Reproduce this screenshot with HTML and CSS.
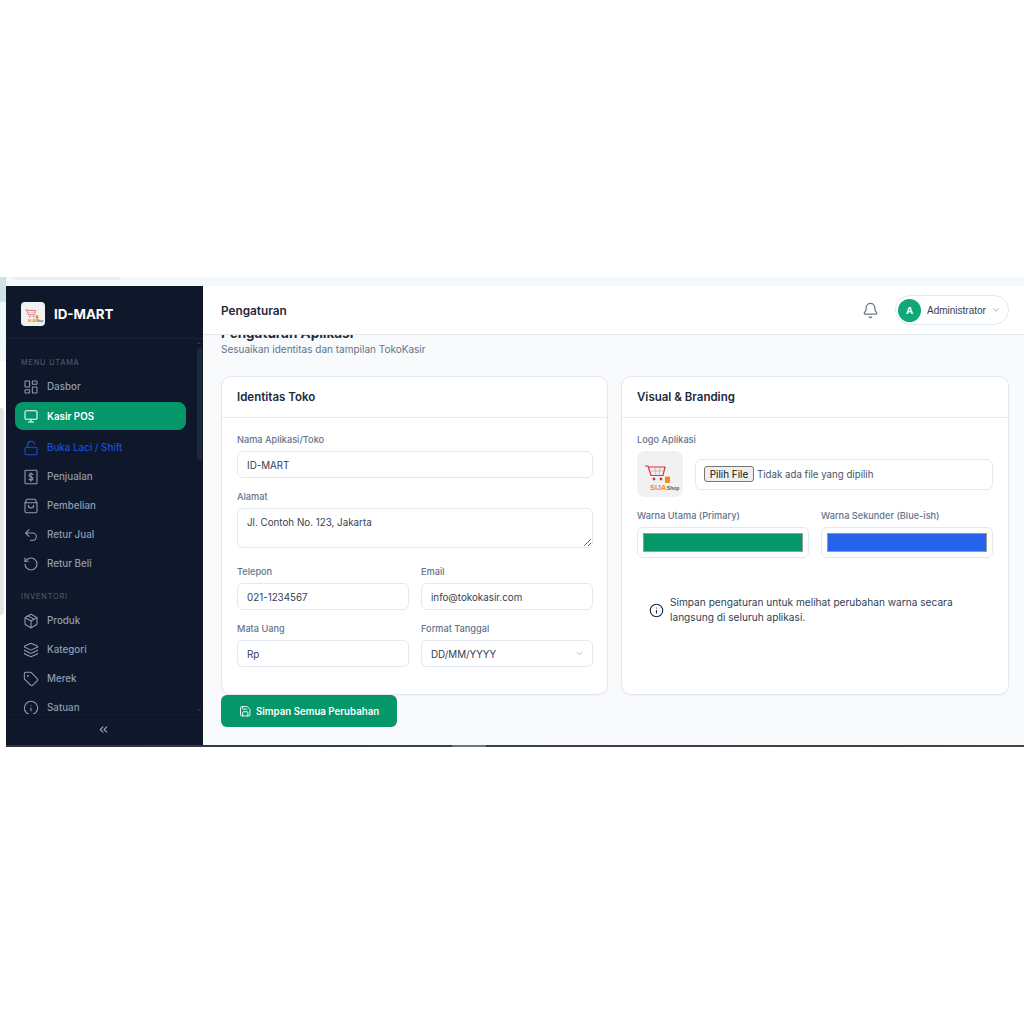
FILE: index.html
```html
<!DOCTYPE html>
<html lang="id">
<head>
<meta charset="utf-8">
<title>Pengaturan - ID-MART</title>
<link rel="stylesheet" href="styles.css">
</head>
<body>
<svg class="defs" width="0" height="0" aria-hidden="true">
  <symbol id="logo" viewBox="0 0 46 46">
    <path d="M8 15h3l3 9.500h12l2-8.500H12" fill="none" stroke="#d9333a" stroke-width="1.200"/>
    <path d="M13 20h14M18 16l.8 8.500M23 16l-.8 8.500" fill="none" stroke="#e77" stroke-width=".5"/>
    <circle cx="17" cy="28" r="1.400" fill="#d9333a"/>
    <circle cx="24" cy="28" r="1.400" fill="#d9333a"/>
    <rect x="28" y="25.500" width="5" height="6.500" rx="1" fill="#f08a1d"/>
    <text x="13" y="38.500" class="logo-a">SIJA</text>
    <text x="29.800" y="38.500" class="logo-b">Shop</text>
  </symbol>
</svg>
<div class="frame">
  <div class="edge">
    <div class="edge-a"></div>
    <div class="edge-b"></div>
    <div class="edge-c"></div>
    <div class="edge-d"></div>
  </div>
  <div class="app">
    <div class="topstrip"><div class="topstrip-pill"></div></div>
    <div class="workspace">
      <aside class="sidebar">
        <div class="brand">
          <svg class="brand-logo"><use href="#logo"/></svg>
          <span class="brand-name">ID-MART</span>
        </div>
        <nav class="nav">
          <div class="nav-label">MENU UTAMA</div>
          <a class="nav-item"><svg class="ico" viewBox="0 0 24 24"><rect x="3" y="3" width="7" height="9" rx="1"/><rect x="14" y="3" width="7" height="5" rx="1"/><rect x="14" y="12" width="7" height="9" rx="1"/><rect x="3" y="16" width="7" height="5" rx="1"/></svg>Dasbor</a>
          <a class="nav-item active"><svg class="ico" viewBox="0 0 24 24"><rect x="3" y="4" width="18" height="13" rx="2"/><path d="M8 21h8M12 17v4"/></svg>Kasir POS</a>
          <a class="nav-item blue"><svg class="ico" viewBox="0 0 24 24"><rect x="3" y="11" width="18" height="11" rx="2"/><path d="M7 11V7a5 5 0 0 1 9.900-1"/></svg>Buka Laci / Shift</a>
          <a class="nav-item"><svg class="ico" viewBox="0 0 24 24"><rect x="3" y="2" width="18" height="20" rx="1"/><path d="M15 8.500c-.5-1-1.600-1.500-3-1.500-1.800 0-3 .9-3 2.400 0 3.300 6 1.600 6 4.900 0 1.500-1.300 2.500-3 2.500-1.500 0-2.600-.6-3.100-1.700M12 5.500v13"/></svg>Penjualan</a>
          <a class="nav-item"><svg class="ico" viewBox="0 0 24 24"><path d="M6 2h12l3 5v13a2 2 0 0 1-2 2H5a2 2 0 0 1-2-2V7z"/><path d="M3 7h18M16 11a4 4 0 0 1-8 0"/></svg>Pembelian</a>
          <a class="nav-item"><svg class="ico" viewBox="0 0 24 24"><path d="M9 14 4 9l5-5"/><path d="M4 9h10.500a5.500 5.500 0 0 1 0 11H11"/></svg>Retur Jual</a>
          <a class="nav-item"><svg class="ico" viewBox="0 0 24 24"><path d="M3 12a9 9 0 1 0 9-9 9.750 9.750 0 0 0-6.740 2.740L3 8"/><path d="M3 3v5h5"/></svg>Retur Beli</a>
          <div class="nav-label second">INVENTORI</div>
          <a class="nav-item"><svg class="ico" viewBox="0 0 24 24"><path d="M21 8a2 2 0 0 0-1-1.730l-7-4a2 2 0 0 0-2 0l-7 4A2 2 0 0 0 3 8v8a2 2 0 0 0 1 1.730l7 4a2 2 0 0 0 2 0l7-4A2 2 0 0 0 21 16Z"/><path d="m7.500 4.270 9 5.150M3.300 7 12 12l8.700-5M12 22V12"/></svg>Produk</a>
          <a class="nav-item"><svg class="ico" viewBox="0 0 24 24"><path d="m12.800 2.200a2 2 0 0 0-1.600 0L2.600 6.100a1 1 0 0 0 0 1.800l8.600 3.900a2 2 0 0 0 1.600 0l8.600-3.900a1 1 0 0 0 0-1.800z"/><path d="M2 12a1 1 0 0 0 .6.900l8.600 3.900a2 2 0 0 0 1.600 0l8.600-3.900A1 1 0 0 0 22 12"/><path d="M2 17a1 1 0 0 0 .6.900l8.600 3.900a2 2 0 0 0 1.600 0l8.600-3.900A1 1 0 0 0 22 17"/></svg>Kategori</a>
          <a class="nav-item"><svg class="ico" viewBox="0 0 24 24"><path d="M12.600 2.600A2 2 0 0 0 11.200 2H4a2 2 0 0 0-2 2v7.200a2 2 0 0 0 .6 1.400l8.700 8.700a2.400 2.400 0 0 0 3.400 0l6.600-6.600a2.400 2.400 0 0 0 0-3.400z"/><circle cx="7.500" cy="7.500" r=".6"/></svg>Merek</a>
          <a class="nav-item"><svg class="ico" viewBox="0 0 24 24"><circle cx="12" cy="12" r="10"/><path d="M12 16v-4M12 8h.01"/></svg>Satuan</a>
        </nav>
        <div class="scrollbar"><div class="scrollbar-thumb"></div></div>
        <div class="collapse"><svg class="ico-collapse" viewBox="0 0 24 24"><path d="m11 17-5-5 5-5M18 17l-5-5 5-5"/></svg></div>
      </aside>
      <main class="main">
        <header class="header">
          <h1 class="page-title">Pengaturan</h1>
          <div class="header-right">
            <svg class="bell" viewBox="0 0 24 24"><path d="M10.300 21a2 2 0 0 0 3.400 0"/><path d="M3.300 15.300A1 1 0 0 0 4 17h16a1 1 0 0 0 .7-1.700C19.400 14 18 12.500 18 8A6 6 0 0 0 6 8c0 4.500-1.400 6-2.700 7.300"/></svg>
            <div class="user">
              <span class="avatar">A</span>
              <span class="user-name">Administrator</span>
              <svg class="chev" viewBox="0 0 24 24"><path d="m6 9 6 6 6-6"/></svg>
            </div>
          </div>
        </header>
        <div class="content">
          <h2 class="heading">Pengaturan Aplikasi</h2>
          <p class="sub">Sesuaikan identitas dan tampilan TokoKasir</p>
          <div class="cards">
            <section class="card">
              <h3 class="card-title">Identitas Toko</h3>
              <div class="card-body">
                <label class="field">
                  <span class="label">Nama Aplikasi/Toko</span>
                  <input class="control" value="ID-MART">
                </label>
                <label class="field">
                  <span class="label">Alamat</span>
                  <textarea class="control area">Jl. Contoh No. 123, Jakarta</textarea>
                </label>
                <div class="two">
                  <label class="field">
                    <span class="label">Telepon</span>
                    <input class="control" value="021-1234567">
                  </label>
                  <label class="field">
                    <span class="label">Email</span>
                    <input class="control" value="info@tokokasir.com">
                  </label>
                  <label class="field">
                    <span class="label">Mata Uang</span>
                    <input class="control" value="Rp">
                  </label>
                  <label class="field">
                    <span class="label">Format Tanggal</span>
                    <span class="select-wrap">
                      <select class="control select"><option>DD/MM/YYYY</option></select>
                      <svg class="select-chev" viewBox="0 0 24 24"><path d="m6 9 6 6 6-6"/></svg>
                    </span>
                  </label>
                </div>
              </div>
            </section>
            <section class="card">
              <h3 class="card-title">Visual &amp; Branding</h3>
              <div class="card-body">
                <div class="field">
                  <span class="label">Logo Aplikasi</span>
                  <div class="logo-row">
                    <svg class="logo-box"><use href="#logo"/></svg>
                    <div class="file-box">
                      <button class="file-btn" type="button">Pilih File</button>
                      <span class="file-text">Tidak ada file yang dipilih</span>
                    </div>
                  </div>
                </div>
                <div class="two">
                  <label class="field">
                    <span class="label">Warna Utama (Primary)</span>
                    <input class="color" type="color" value="#059669">
                  </label>
                  <label class="field">
                    <span class="label">Warna Sekunder (Blue-ish)</span>
                    <input class="color" type="color" value="#2563eb">
                  </label>
                </div>
                <div class="info">
                  <svg class="info-ico" viewBox="0 0 24 24"><circle cx="12" cy="12" r="10"/><path d="M12 16v-4M12 8h.01"/></svg>
                  <p class="info-text">Simpan pengaturan untuk melihat perubahan warna secara langsung di seluruh aplikasi.</p>
                </div>
              </div>
            </section>
          </div>
          <button class="save" type="button"><svg class="save-ico" viewBox="0 0 24 24"><path d="M15.200 3a2 2 0 0 1 1.400.6l3.800 3.800a2 2 0 0 1 .6 1.400V19a2 2 0 0 1-2 2H5a2 2 0 0 1-2-2V5a2 2 0 0 1 2-2z"/><path d="M17 21v-7a1 1 0 0 0-1-1H8a1 1 0 0 0-1 1v7M7 3v4a1 1 0 0 0 1 1h7"/></svg>Simpan Semua Perubahan</button>
        </div>
      </main>
    </div>
    <div class="bottomline"></div>
  </div>
</div>
</body>
</html>
```
FILE: styles.css
```css
* { box-sizing: border-box; }
html, body { margin: 0; background: #fff; }
body { font-family: Inter, "Liberation Sans", sans-serif; color: #1e293b; padding-top: 277px; height: 1024px; overflow: hidden; }
.defs { position: absolute; }
.logo-a { font-family: "Liberation Sans", sans-serif; font-weight: 700; font-size: 7.400px; fill: #f08a1d; }
.logo-b { font-family: "Liberation Sans", sans-serif; font-weight: 700; font-size: 5px; fill: #3b5a78; }

.frame { display: flex; height: 470px; }
.edge { width: 6px; flex: none; display: flex; flex-direction: column; }
.edge-a { height: 25px; background: #cfe3e6; }
.edge-b { height: 59px; background: #eef8fb; }
.edge-c { height: 47px; background: #fff; }
.edge-d { height: 207px; width: 4px; background: #e4e4e6; border-radius: 0 3px 3px 0; }

.app { flex: 1; min-width: 0; display: flex; flex-direction: column; }
.topstrip { height: 9px; background: #f4f8fb; padding: 0 904px 0 7px; flex: none; }
.topstrip-pill { height: 3px; background: #e9eff2; border-radius: 0 0 6px 6px; }
.workspace { display: flex; height: 459px; flex: none; }
.bottomline { height: 2px; flex: none; background: linear-gradient(90deg, #2f3340 0, #3a3f4d 446px, #6f737b 446px, #6f737b 480px, #3a3f4d 480px, #4a4440 100%); }

/* sidebar */
.sidebar { width: 197px; flex: none; background: #0f172a; display: flex; flex-direction: column; position: relative; }
.brand { height: 53px; flex: none; display: flex; align-items: center; gap: 9px; padding: 3px 0 0 15px; border-bottom: 1px solid #1a2336; }
.brand-logo { width: 24px; height: 24px; background: #f1f1f1; border-radius: 4px; }
.brand-name { font-size: 13.300px; font-weight: 700; color: #fff; }
.nav { flex: 1; min-height: 0; overflow: hidden; padding: 18px 17px 0 9px; }
.nav-label { font-size: 7.400px; line-height: 10px; letter-spacing: .75px; font-weight: 500; color: #475569; padding: 1px 0 4px 6px; }
.nav-label.second { margin-top: 13px; }
.nav-item { display: flex; align-items: center; gap: 8px; height: 29px; padding-left: 8px; border-radius: 8px; font-size: 9.800px; font-weight: 500; color: #8e9db3; }
.nav-item.active { height: 28px; margin: 1px 0 3px; background: #059669; color: #fff; font-weight: 600; }
.nav-item.blue { color: #1d4ed8; }
.ico { width: 16px; height: 16px; flex: none; fill: none; stroke: currentColor; stroke-width: 1.600; stroke-linecap: round; stroke-linejoin: round; }
.scrollbar { position: absolute; left: 191px; top: 53px; width: 5px; height: 375px; padding-top: 9px; }
.scrollbar::before, .scrollbar::after { content: ""; position: absolute; left: 0; border: 2.500px solid transparent; }
.scrollbar::before { top: 1px; border-bottom-color: #2a3448; }
.scrollbar::after { bottom: 1px; border-top-color: #2a3448; }
.scrollbar-thumb { height: 112px; background: #1e293b; border-radius: 3px; }
.collapse { height: 31px; flex: none; border-top: 1px solid #141d30; display: flex; align-items: center; justify-content: center; padding: 0 2px 2px 0; }
.ico-collapse { width: 13px; height: 13px; fill: none; stroke: #94a3b8; stroke-width: 2; stroke-linecap: round; stroke-linejoin: round; }

/* main */
.main { flex: 1; min-width: 0; display: flex; flex-direction: column; background: #f8fafc; overflow: hidden; }
.header { height: 49px; flex: none; display: flex; align-items: center; justify-content: space-between; padding: 0 15px 0 18px; background: #fff; border-bottom: 1px solid #e2e8f0; position: relative; z-index: 1; }
.page-title { margin: 0; padding-top: 1px; font-size: 11.800px; font-weight: 600; color: #1e293b; }
.header-right { display: flex; align-items: center; gap: 16px; }
.bell { width: 17px; height: 17px; fill: none; stroke: #64748b; stroke-width: 1.700; stroke-linecap: round; stroke-linejoin: round; }
.user { display: flex; align-items: center; height: 30px; width: 114px; padding-left: 2px; border: 1px solid #e2e8f0; border-radius: 15px; background: #fff; }
.avatar { width: 23px; height: 23px; border-radius: 50%; background: #10a876; color: #fff; display: flex; align-items: center; justify-content: center; font-size: 9.600px; font-weight: 700; }
.user-name { margin-left: 6px; font-family: "Liberation Sans", sans-serif; font-size: 10px; color: #334155; }
.chev { width: 10px; height: 10px; margin-left: 5px; fill: none; stroke: #94a3b8; stroke-width: 2; stroke-linecap: round; stroke-linejoin: round; }

.content { flex: 1; min-height: 0; padding: 0 16px 0 18px; }
.heading { margin: -12px 0 0; font-size: 13.500px; line-height: 20px; font-weight: 700; color: #1e293b; }
.sub { margin: 0; font-size: 10px; line-height: 13px; color: #64748b; }
.cards { display: grid; grid-template-columns: 387px 388px; column-gap: 13px; margin-top: 20px; height: 319px; }
.card { background: #fff; border: 1px solid #e2e8f0; border-radius: 10px; box-shadow: 0 1px 2px rgba(15, 23, 42, .04); display: flex; flex-direction: column; }
.card-title { margin: 0; height: 41px; flex: none; display: flex; align-items: center; padding: 0 0 1px 15px; font-size: 11.500px; font-weight: 600; color: #1e293b; border-bottom: 1px solid #e8edf3; }
.card-body { padding: 16px 14px 0 15px; }
.field { display: block; min-width: 0; margin-bottom: 13px; }
.label { display: block; font-size: 9.200px; line-height: 12px; font-weight: 500; color: #64748b; margin-bottom: 5px; }
.control { display: block; width: 100%; height: 27px; padding: 1px 9px 0; border: 1px solid #e2e8f0; border-radius: 6px; background: #fff; font-family: Inter, "Liberation Sans", sans-serif; font-size: 9.800px; color: #334155; outline: none; }
.area { height: 40px; padding: 8px 9px; resize: vertical; }
.field:has(.area) { margin-bottom: 18px; }
.two { display: grid; grid-template-columns: 172px 172px; column-gap: 12px; }
.select { appearance: none; -webkit-appearance: none; }
.select-wrap { display: block; position: relative; }
.select-chev { position: absolute; right: 9px; top: 9px; width: 9px; height: 9px; fill: none; stroke: #94a3b8; stroke-width: 2; stroke-linecap: round; stroke-linejoin: round; }

.logo-row { display: flex; align-items: center; gap: 12px; }
.logo-box { width: 46px; height: 46px; flex: none; background: #f1f1f1; border-radius: 8px; }
.file-box { width: 298px; height: 31px; border: 1px solid #e2e8f0; border-radius: 6px; display: flex; align-items: center; padding-left: 8px; }
.file-btn { height: 16px; width: 50px; padding: 0; border: 1px solid #767676; border-radius: 3px; background: #efefef; font-family: Inter, "Liberation Sans", sans-serif; font-size: 9.900px; color: #111; }
.file-text { margin-left: 3px; font-size: 9.700px; color: #475569; }
.color { display: block; width: 100%; height: 31px; padding: 5px; border: 1px solid #e2e8f0; border-radius: 6px; background: #fff; appearance: none; -webkit-appearance: none; }
.color::-webkit-color-swatch-wrapper { padding: 0; }
.color::-webkit-color-swatch { border: 1px solid #999; border-radius: 0; }
.info { display: flex; align-items: center; gap: 6.500px; margin-top: 24px; padding: 0 12px 0 11.500px; }
.info-ico { width: 15px; height: 15px; flex: none; fill: none; stroke: #1e293b; stroke-width: 1.800; stroke-linecap: round; stroke-linejoin: round; }
.info-text { margin: 0; font-size: 10.150px; line-height: 15px; color: #334155; }
.save { display: flex; align-items: center; gap: 4.500px; width: 176px; height: 32px; padding: 0 0 0 18px; border: none; border-radius: 6px; background: #059669; color: #fff; font-family: Inter, "Liberation Sans", sans-serif; font-size: 9.700px; font-weight: 600; }
.save-ico { width: 12.500px; height: 12.500px; fill: none; stroke: #fff; stroke-width: 1.800; stroke-linecap: round; stroke-linejoin: round; }
```
